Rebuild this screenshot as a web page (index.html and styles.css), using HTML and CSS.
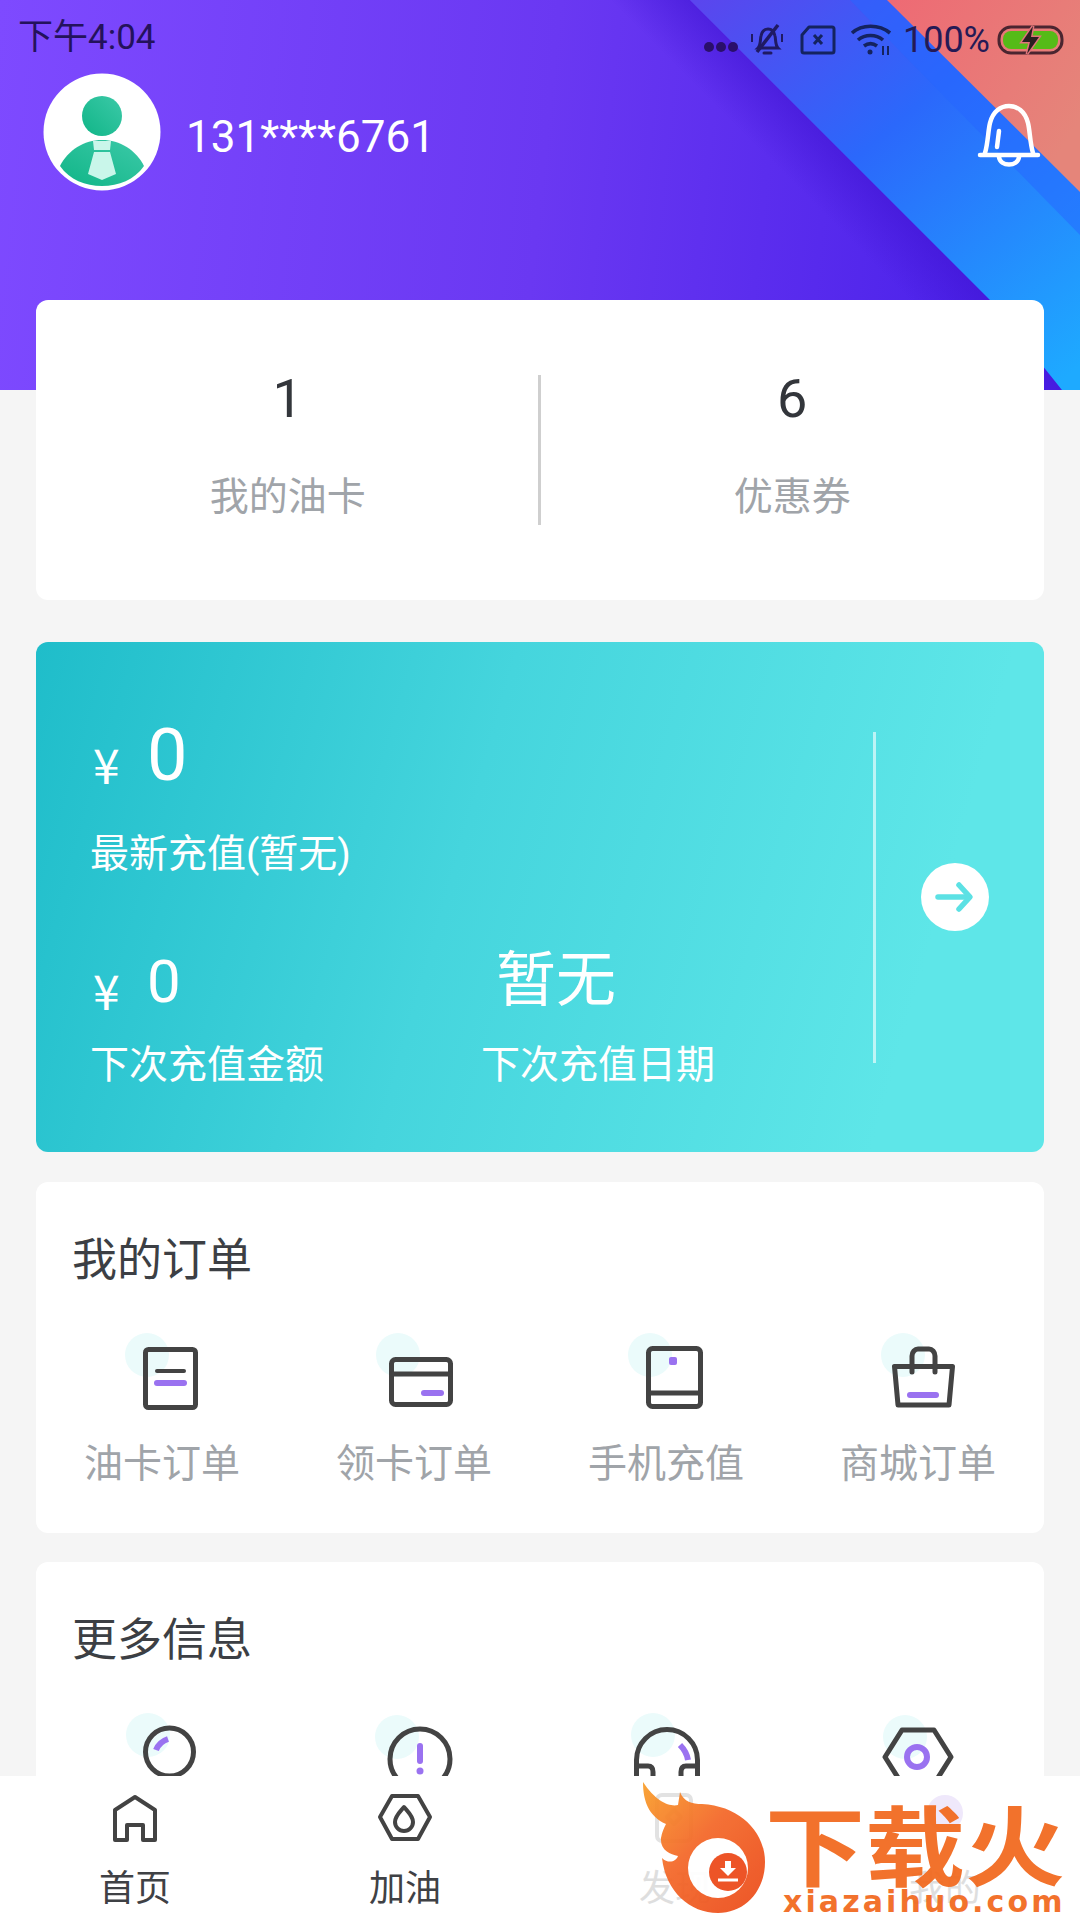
FILE: index.html
```html
<!DOCTYPE html>
<html lang="en">
<head>
  <meta charset="UTF-8">
  <meta name="viewport" content="width=device-width, initial-scale=1.0">
  <title>我的</title>
  <link rel="stylesheet" href="styles.css">
</head>
<body>
<div class="page">
  <div class="scroll">
    <header class="header">
      <svg class="header-bg" width="1080" height="390" viewBox="0 0 1080 390">
        <defs>
          <linearGradient id="bandGrad" x1="700" y1="0" x2="1040" y2="400" gradientUnits="userSpaceOnUse">
            <stop offset="0" stop-color="#5a46ee"/>
            <stop offset="0.42" stop-color="#2b68fb"/>
            <stop offset="1" stop-color="#1eaaff"/>
          </linearGradient>
          <linearGradient id="coralGrad" x1="890" y1="0" x2="1080" y2="120" gradientUnits="userSpaceOnUse">
            <stop offset="0" stop-color="#ee6a74"/>
            <stop offset="1" stop-color="#e5857a"/>
          </linearGradient>
          <linearGradient id="shadeGrad" x1="860" y1="170" x2="820" y2="210" gradientUnits="userSpaceOnUse">
            <stop offset="0" stop-color="#3f14d2" stop-opacity="0.55"/>
            <stop offset="1" stop-color="#3f14d2" stop-opacity="0"/>
          </linearGradient>
        </defs>
        <polygon points="690,0 990,300 1062,390 900,390 600,0" fill="url(#shadeGrad)"/>
        <polygon points="690,0 1080,0 1080,390 1062,390 990,300" fill="url(#bandGrad)"/>
        <polygon points="850,0 1080,0 1080,235" fill="#2565ff" opacity="0.5"/>
        <polygon points="887,0 1080,0 1080,192" fill="url(#coralGrad)"/>
      </svg>

      <div class="statusbar">
        <span class="time">下午4:04</span>
        <div class="status-icons">
          <svg width="36" height="40" viewBox="0 0 36 40"><g fill="#2a0f6a"><circle cx="6" cy="27" r="5"/><circle cx="18" cy="27" r="5"/><circle cx="30" cy="27" r="5"/></g></svg>
          <svg class="st-bell" width="36" height="36" viewBox="0 0 36 36" fill="none" stroke="#1f1a63" stroke-width="3"><path d="M9 26c3-3 2-8 3-12 1-5 4-7 7-7s6 2 7 7c1 4 0 9 3 12z"/><path d="M15 31h7" stroke-linecap="round"/><path d="M8 30 29 3" stroke-width="3.500"/><path d="M3 12v8M33 12v8" stroke-width="2"/></svg>
          <svg class="st-sim" width="36" height="30" viewBox="0 0 36 30" fill="none" stroke="#14235f" stroke-width="3"><path d="M9 2h23a2 2 0 0 1 2 2v22a2 2 0 0 1-2 2H4a2 2 0 0 1-2-2V10z" stroke-linejoin="round"/><path d="M14 10l8 9M22 10l-8 9"/></svg>
          <svg class="st-wifi" width="42" height="34" viewBox="0 0 42 34" fill="none" stroke="#14235f" stroke-width="3.600"><path d="M2 10c10-9 27-9 38 0"/><path d="M8 17c7-6 18-6 25 0"/><path d="M14 23c4-3 9-3 13 0"/><circle cx="20" cy="29" r="2.500" fill="#14235f" stroke="none"/><path d="M33 23v9M38 23v9" stroke-width="2"/></svg>
          <span class="batt-text">100%</span>
          <svg class="st-batt" width="67" height="30" viewBox="0 0 67 30"><rect x="2" y="2" width="63" height="26" rx="12" fill="none" stroke="#4a2530" stroke-width="3"/><rect x="6" y="6" width="55" height="18" rx="8" fill="#55bb17"/><path d="M36 1 25 17h8l-3 12 12-17h-8z" fill="#2a1f20" stroke="#e0747a" stroke-width="3" paint-order="stroke"/></svg>
        </div>
      </div>

      <div class="user-row">
        <svg class="avatar" width="118" height="118" viewBox="0 0 118 118">
          <defs>
            <linearGradient id="avatarGrad" x1="0" y1="1" x2="1" y2="0">
              <stop offset="0" stop-color="#10b587"/>
              <stop offset="1" stop-color="#3cc9a8"/>
            </linearGradient>
          </defs>
          <circle cx="59" cy="59" r="58.500" fill="#fff"/>
          <circle cx="59" cy="43" r="20" fill="url(#avatarGrad)"/>
          <path d="M17 93C25 77 41 67 59 67s34 10 42 26c-10 14-25 20-42 20S27 107 17 93z" fill="url(#avatarGrad)"/>
          <path d="M50 68h18l-1 9H51zM51 79h16l6 22-14 6-14-6z" fill="#c9f6ea"/>
        </svg>
        <span class="phone">131****6761</span>
        <svg class="bell" width="64" height="64" viewBox="0 0 64 64" fill="none" stroke="#fff" stroke-width="4.500" stroke-linecap="round"><path d="M8 50C11 40 11 28 13 20 16 8 24 3 32 3s16 5 19 17c2 8 2 20 5 30"/><path d="M3 52h58"/><path d="M22 54c1 10 19 10 20 0"/><path d="M22 28l-2 16"/></svg>
      </div>
    </header>

    <main class="content">
      <section class="card stats">
        <div class="stat">
          <div class="stat-num">1</div>
          <div class="stat-label">我的油卡</div>
        </div>
        <div class="stat-divider"></div>
        <div class="stat">
          <div class="stat-num">6</div>
          <div class="stat-label">优惠券</div>
        </div>
      </section>

      <section class="recharge">
        <div class="recharge-main">
          <div class="amount amount-big"><span class="yen">¥</span><span class="amount-num">0</span></div>
          <div class="recharge-label label-latest">最新充值(暂无)</div>
          <div class="next-row">
            <div class="next-col">
              <div class="amount amount-small"><span class="yen">¥</span><span class="amount-num">0</span></div>
              <div class="recharge-label">下次充值金额</div>
            </div>
            <div class="next-col">
              <div class="next-date">暂无</div>
              <div class="recharge-label">下次充值日期</div>
            </div>
          </div>
        </div>
        <div class="recharge-divider"></div>
        <div class="recharge-side">
          <div class="go-btn">
            <svg width="40" height="32" viewBox="0 0 40 32" fill="none" stroke="#5ce1e4" stroke-width="5.500" stroke-linecap="round" stroke-linejoin="round"><path d="M3 16h31"/><path d="M24 4l11 12-11 12"/></svg>
          </div>
        </div>
      </section>

      <section class="card panel">
        <h2 class="panel-title">我的订单</h2>
        <div class="icon-grid">
          <div class="icon-cell">
            <svg class="cell-icon" viewBox="0 0 80 84" fill="none" stroke="#434343" stroke-width="5" stroke-linecap="round" stroke-linejoin="round">
              <circle class="pale" cx="25" cy="25" r="22"/>
              <rect x="23.500" y="19.500" width="50" height="58" rx="3"/>
              <path d="M35 41h27" stroke-width="4"/>
              <path class="accent" d="M35 53h27"/>
            </svg>
            <span class="cell-label">油卡订单</span>
          </div>
          <div class="icon-cell">
            <svg class="cell-icon" viewBox="0 0 80 84" fill="none" stroke="#434343" stroke-width="5" stroke-linecap="round" stroke-linejoin="round">
              <circle class="pale" cx="24" cy="25" r="22"/>
              <rect x="17.500" y="29.500" width="59" height="45" rx="4"/>
              <path d="M18 44h58"/>
              <path class="accent" d="M50 63h17"/>
            </svg>
            <span class="cell-label">领卡订单</span>
          </div>
          <div class="icon-cell">
            <svg class="cell-icon" viewBox="0 0 80 84" fill="none" stroke="#434343" stroke-width="5" stroke-linecap="round" stroke-linejoin="round">
              <circle class="pale" cx="24" cy="25" r="22"/>
              <rect x="22.500" y="18.500" width="52" height="58" rx="4"/>
              <path d="M23 63h51"/>
              <rect x="43" y="27" width="8" height="8" rx="2" fill="#9a72f0" stroke="none"/>
            </svg>
            <span class="cell-label">手机充值</span>
          </div>
          <div class="icon-cell">
            <svg class="cell-icon" viewBox="0 0 80 84" fill="none" stroke="#434343" stroke-width="5" stroke-linecap="round" stroke-linejoin="round">
              <circle class="pale" cx="25" cy="25" r="22"/>
              <path d="M16.500 36.500h58L71 75H20z"/>
              <path d="M34 42V26c0-4 3-7 6-7h11c3 0 6 3 6 7v16"/>
              <path class="accent" d="M32 65h26"/>
            </svg>
            <span class="cell-label">商城订单</span>
          </div>
        </div>
      </section>

      <section class="card panel">
        <h2 class="panel-title">更多信息</h2>
        <div class="icon-grid">
          <div class="icon-cell">
            <svg class="cell-icon" viewBox="0 0 80 84" fill="none" stroke="#434343" stroke-width="5" stroke-linecap="round">
              <circle class="pale" cx="26" cy="25" r="22"/>
              <circle cx="47.500" cy="42" r="24"/>
              <path class="accent accent-flat" d="M34 40c2-5 6-9 12-11"/>
            </svg>
          </div>
          <div class="icon-cell">
            <svg class="cell-icon" viewBox="0 0 80 84" fill="none" stroke="#434343" stroke-width="5" stroke-linecap="round">
              <circle class="pale" cx="23" cy="27" r="22"/>
              <circle cx="46" cy="49" r="30"/>
              <path class="accent" d="M46 36v15"/>
              <circle cx="46" cy="61" r="3.500" fill="#9a72f0" stroke="none"/>
            </svg>
          </div>
          <div class="icon-cell">
            <svg class="cell-icon" viewBox="0 0 80 84" fill="none" stroke="#434343" stroke-width="5" stroke-linecap="round">
              <circle class="pale" cx="27" cy="25" r="22"/>
              <path d="M10.500 84V50a30.500 30.500 0 0 1 61 0v34"/>
              <path d="M11 56h11c3 0 5 2 5 6v22M71 56H60c-3 0-5 2-5 6v22"/>
              <path class="accent accent-flat" d="M54 35c4 4 7 9 8 15"/>
            </svg>
          </div>
          <div class="icon-cell">
            <svg class="cell-icon" viewBox="0 0 80 84" fill="none" stroke="#434343" stroke-width="5" stroke-linejoin="round">
              <circle class="pale" cx="27" cy="27" r="22"/>
              <path d="M7 47l17-27h32l17 27-17 27H24z"/>
              <circle cx="39" cy="47" r="10" stroke="#9a72f0" stroke-width="6"/>
            </svg>
          </div>
        </div>
      </section>
    </main>
  </div>

  <nav class="tabbar">
    <div class="tab">
      <svg class="tab-icon" viewBox="0 0 56 52" fill="none" stroke="#434343" stroke-width="4" stroke-linejoin="round"><path d="M8 47V17L28 4l20 13v30H36V32H20v15z"/></svg>
      <span class="tab-label">首页</span>
    </div>
    <div class="tab">
      <svg class="tab-icon" viewBox="0 0 56 52" fill="none" stroke="#434343" stroke-width="4" stroke-linejoin="round"><path d="M3 24L15 3h26l12 21-12 22H15z"/><path d="M27 14c4 5 9 9 9 15a9 9 0 0 1-18 0c0-6 5-10 9-15z"/></svg>
      <span class="tab-label">加油</span>
    </div>
    <div class="tab tab-muted">
      <svg class="tab-icon" viewBox="0 0 56 52" fill="none" stroke="#e2e2e2" stroke-width="4" stroke-linejoin="round"><rect x="10" y="2" width="34" height="46" rx="5"/><path d="M27 17l7 7-7 7-7-7z"/></svg>
      <span class="tab-label">发现</span>
    </div>
    <div class="tab tab-muted">
      <svg class="tab-icon" viewBox="0 0 56 52" fill="none"><circle cx="28" cy="20" r="18" fill="#efe8fb"/></svg>
      <span class="tab-label">我的</span>
    </div>
  </nav>

  <div class="watermark">
    <svg class="wm-flame" width="130" height="136" viewBox="0 0 130 136">
      <defs>
        <linearGradient id="flameGrad" x1="0" y1="0" x2="1" y2="1">
          <stop offset="0" stop-color="#f9a02c"/>
          <stop offset="0.45" stop-color="#f4692a"/>
          <stop offset="1" stop-color="#ec4a1a"/>
        </linearGradient>
      </defs>
      <path d="M3 2C16 22 30 27 38 25L40 12C44 22 52 24 62 24 100 26 125 52 125 82 125 112 104 133 78 133 50 133 26 112 22 78 28 84 36 82 38 76 30 74 20 70 21 58 22 52 24 48 26 44 8 36 3 20 3 2Z" fill="url(#flameGrad)"/>
      <circle cx="78" cy="88" r="30" fill="#fff"/>
      <circle cx="88" cy="92" r="19" fill="#ec4a1a"/>
      <path d="M85 81h6v7h5l-8 8-8-8h5z" fill="#fff"/>
      <path d="M78 100h20" stroke="#fff" stroke-width="3"/>
    </svg>
    <div class="wm-text">
      <div class="wm-cn">下载火</div>
      <div class="wm-en">xiazaihuo.com</div>
    </div>
  </div>
</div>
</body>
</html>
```

FILE: styles.css
```css
/* General */
* {
  box-sizing: border-box;
}

body {
  margin: 0;
  font-family: Roboto, "Noto Sans CJK SC", sans-serif;
  background-color: #f5f5f5;
}

.page {
  position: relative;
  width: 1080px;
  height: 1920px;
  display: flex;
  flex-direction: column;
  overflow: hidden;
}

.scroll {
  flex: 1;
  min-height: 0;
  overflow: hidden;
}

/* Header */
.header {
  position: relative;
  height: 390px;
  background: linear-gradient(96deg, #7e4aff 0%, #6a38f2 50%, #4c22ea 90%);
}

.header-bg {
  position: absolute;
  left: 0;
  top: 0;
}

.statusbar {
  position: relative;
  height: 73px;
  padding: 17px 16px 0 18px;
  display: flex;
  justify-content: space-between;
  align-items: flex-start;
}

.time {
  font-size: 35px;
  line-height: 42px;
  color: #24125c;
}

.status-icons {
  display: flex;
  align-items: center;
  gap: 10px;
  margin-top: 3px;
}

.st-sim {
  margin-left: 5px;
}

.st-wifi {
  margin-left: 4px;
}

.st-batt {
  margin-left: -3px;
}

.batt-text {
  font-size: 36px;
  line-height: 34px;
  color: #251a55;
  margin-left: 1px;
}

.user-row {
  position: relative;
  display: flex;
  align-items: center;
  padding: 0 39px 0 43px;
}

.phone {
  margin-left: 25px;
  margin-top: 10px;
  font-size: 44px;
  color: #fff;
}

.bell {
  margin-left: auto;
  margin-top: 6px;
}

/* Cards */
.content {
  position: relative;
  margin-top: -90px;
  padding: 0 36px;
}

.card {
  background-color: #fff;
  border-radius: 12px;
}

.stats {
  height: 300px;
  display: flex;
  align-items: flex-start;
}

.stat {
  flex: 1;
  text-align: center;
  padding-top: 69px;
}

.stat-num {
  font-size: 54px;
  line-height: 60px;
  color: #33363b;
}

.stat-label {
  margin-top: 43px;
  font-size: 39px;
  line-height: 50px;
  color: #a0a4a9;
}

.stat-divider {
  width: 3px;
  height: 150px;
  margin-top: 75px;
  margin-left: -2px;
  background-color: #cfcfcf;
}

/* Recharge card */
.recharge {
  height: 510px;
  margin-top: 42px;
  border-radius: 12px;
  display: flex;
  align-items: center;
  color: #fff;
  background: linear-gradient(106deg, #1fbdca 0%, #45d5dd 42%, #5ee6e8 85%);
}

.recharge-main {
  width: 837px;
  height: 510px;
  padding: 73px 0 0 54px;
}

.amount {
  display: flex;
  align-items: center;
  padding-left: 3px;
}

.amount-big {
  height: 80px;
}

.amount-small {
  height: 70px;
}

.yen {
  width: 54px;
  font-family: "Noto Sans CJK SC", sans-serif;
  font-size: 48px;
  line-height: 60px;
  margin-top: 16px;
}

.amount-big .amount-num {
  font-size: 72px;
}

.amount-small .amount-num {
  font-size: 60px;
}

.recharge-label {
  font-size: 39px;
  line-height: 50px;
  white-space: nowrap;
}

.label-latest {
  margin-top: 34px;
}

.next-row {
  display: flex;
  margin-top: 67px;
}

.next-col {
  width: 391px;
}

.next-col .recharge-label {
  margin-top: 24px;
}

.next-date {
  height: 70px;
  line-height: 70px;
  padding-left: 15px;
  font-size: 60px;
}

.recharge-divider {
  width: 3px;
  height: 331px;
  background-color: rgba(255, 255, 255, 0.6);
}

.recharge-side {
  flex: 1;
  display: flex;
  justify-content: center;
  padding-right: 10px;
}

.go-btn {
  width: 68px;
  height: 68px;
  border-radius: 50%;
  background-color: #fff;
  display: flex;
  align-items: center;
  justify-content: center;
}

/* Order and info panels */
.panel {
  height: 351px;
  margin-top: 30px;
}

.panel + .panel {
  margin-top: 29px;
}

.panel-title {
  margin: 0;
  padding: 52px 0 0 36px;
  font-size: 45px;
  line-height: 54px;
  font-weight: 400;
  color: #3c3f44;
}

.icon-grid {
  display: grid;
  grid-template-columns: repeat(4, 1fr);
  margin-top: 42px;
}

.icon-cell {
  display: flex;
  flex-direction: column;
  align-items: center;
}

.cell-icon {
  width: 80px;
  height: 84px;
}

.pale {
  fill: #ebfbfb;
  stroke: none;
}

.accent {
  stroke: #9a72f0;
  stroke-width: 6;
}

.accent-flat {
  stroke-linecap: butt;
}

.cell-label {
  margin-top: 28px;
  font-size: 39px;
  line-height: 44px;
  color: #a0a4a9;
}

/* Bottom tabs */
.tabbar {
  height: 144px;
  flex-shrink: 0;
  display: grid;
  grid-template-columns: repeat(4, 1fr);
  background-color: #fff;
}

.tab {
  display: flex;
  flex-direction: column;
  align-items: center;
  padding-top: 17px;
}

.tab-icon {
  width: 56px;
  height: 52px;
}

.tab-label {
  margin-top: 21px;
  font-size: 36px;
  line-height: 46px;
  color: #3f4145;
}

.tab-muted .tab-label {
  color: #dedede;
}

/* Download site watermark */
.watermark {
  position: absolute;
  left: 640px;
  top: 1780px;
  display: flex;
  opacity: 0.94;
}

.wm-text {
  margin-left: -5px;
  width: 310px;
}

.wm-cn {
  height: 108px;
  font-family: "Noto Sans CJK SC", sans-serif;
  font-size: 100px;
  line-height: 112px;
  font-weight: 700;
  color: #f26a1f;
  transform: scaleY(0.87);
  transform-origin: bottom;
}

.wm-en {
  padding-left: 18px;
  font-family: "DejaVu Sans", sans-serif;
  font-size: 30px;
  line-height: 28px;
  font-weight: 700;
  letter-spacing: 3.1px;
  color: #f26a1f;
  white-space: nowrap;
}
```
